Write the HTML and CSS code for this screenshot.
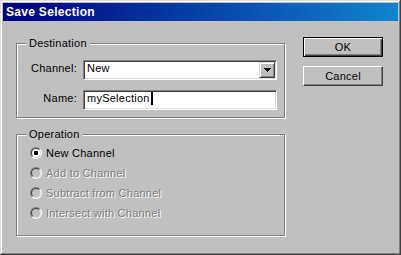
FILE: index.html
```html
<!DOCTYPE html>
<html lang="en">
<head>
    <meta charset="UTF-8">
    <title>Save Selection</title>
    <link rel="stylesheet" href="styles.css">
</head>
<body>
    <div class="window">
        <div class="titlebar">Save Selection</div>

        <div class="dialog">
            <div class="groups">
                <fieldset class="group dest">
                    <legend>Destination</legend>
                    <div class="field-row">
                        <label>Channel:</label>
                        <div class="select">
                            <span class="select-value">New</span>
                            <span class="select-arrow">
                                <svg width="7" height="4" viewBox="0 0 7 4" shape-rendering="crispEdges">
                                    <path d="M0 0h7v1h-1v1h-1v1h-1v1h-1v-1h-1v-1h-1v-1h-1z" fill="#000"/>
                                </svg>
                            </span>
                        </div>
                    </div>
                    <div class="field-row">
                        <label>Name:</label>
                        <div class="textbox">mySelection<span class="caret"></span></div>
                    </div>
                </fieldset>

                <fieldset class="group op">
                    <legend>Operation</legend>
                    <div class="radio-row"><span class="radio checked"></span>New Channel</div>
                    <div class="radio-row disabled"><span class="radio"></span>Add to Channel</div>
                    <div class="radio-row disabled"><span class="radio"></span>Subtract from Channel</div>
                    <div class="radio-row disabled"><span class="radio"></span>Intersect with Channel</div>
                </fieldset>
            </div>

            <div class="buttons">
                <button class="btn default">OK</button>
                <button class="btn">Cancel</button>
            </div>
        </div>
    </div>
</body>
</html>
```

FILE: styles.css
```css
body {
    margin: 0;
    font-family: 'Liberation Sans', Arial, sans-serif;
    font-size: 11px;
    letter-spacing: 0.25px;
    background-color: #c0c0c0;
}

.window {
    width: 401px;
    height: 255px;
    box-sizing: border-box;
    padding: 3px;
    background-color: #c0c0c0;
    box-shadow: inset -1px -1px #404040, inset 1px 1px #dfdfdf,
                inset -2px -2px #808080, inset 2px 2px #fff;
}

.titlebar {
    height: 18px;
    line-height: 18px;
    padding-left: 3px;
    color: white;
    font-size: 12px;
    font-weight: bold;
    letter-spacing: 0.3px;
    background: linear-gradient(to right, #000080, #1084d0);
}

.dialog {
    display: flex;
    align-items: flex-start;
    gap: 18px;
    padding: 16px 0 0 13px;
}

.groups {
    width: 269px;
    display: flex;
    flex-direction: column;
    gap: 10px;
}

/* etched group box */
.group {
    margin: 0;
    min-width: 0;
    border: 1px solid #808080;
    box-shadow: inset 1px 1px #fff, 1px 1px #fff;
    padding: 0 7px 0 9px;
}

.group legend {
    padding: 0 3px;
    line-height: 13px;
    background-color: #c0c0c0;
    color: #000;
}

.dest {
    padding-top: 10px;
    padding-bottom: 7px;
    display: flex;
    flex-direction: column;
    gap: 10px;
}

.op {
    padding-top: 2px;
    padding-bottom: 12px;
}

.field-row {
    display: grid;
    grid-template-columns: 51px 194px;
    column-gap: 6px;
    align-items: start;
}

.field-row label {
    text-align: right;
    line-height: 13px;
    padding-top: 2px;
}

/* sunken input boxes */
.select, .textbox {
    height: 20px;
    box-sizing: border-box;
    background-color: white;
    border: 1px solid;
    border-color: #808080 #fff #fff #808080;
    box-shadow: inset 1px 1px #404040, inset -1px -1px #dfdfdf;
    padding: 1px 1px 1px 3px;
    line-height: 13px;
}

.select {
    display: flex;
    justify-content: space-between;
    padding-right: 1px;
}

.select-arrow {
    width: 16px;
    height: 16px;
    box-sizing: border-box;
    background-color: #c0c0c0;
    border: 1px solid;
    border-color: #dfdfdf #404040 #404040 #dfdfdf;
    box-shadow: inset 1px 1px #fff, inset -1px -1px #808080;
    display: flex;
    align-items: center;
    justify-content: center;
}

.caret {
    display: inline-block;
    width: 2px;
    height: 13px;
    margin-left: 1px;
    background-color: #000;
    vertical-align: top;
}

.radio-row {
    height: 20px;
    display: flex;
    align-items: center;
    gap: 4px;
    padding-left: 4px;
}

.radio-row.disabled {
    color: #808080;
    text-shadow: 1px 1px 0 #fff;
}

.radio {
    width: 12px;
    height: 12px;
    box-sizing: border-box;
    border-radius: 50%;
    border: 1px solid;
    border-color: #808080 #fff #fff #808080;
    position: relative;
}

.radio::before {
    content: '';
    position: absolute;
    inset: 0;
    border-radius: 50%;
    border: 1px solid;
    border-color: #404040 #dfdfdf #dfdfdf #404040;
    background-color: white;
}

.disabled .radio::before {
    background-color: #c0c0c0;
}

.radio.checked::after {
    content: '';
    position: absolute;
    left: 3px;
    top: 3px;
    width: 4px;
    height: 4px;
    border-radius: 1px;
    background-color: #000;
}

.buttons {
    width: 80px;
    display: flex;
    flex-direction: column;
    gap: 9px;
}

.btn {
    height: 20px;
    padding: 0;
    font-family: inherit;
    font-size: 11px;
    letter-spacing: 0.25px;
    color: #000;
    background-color: #c0c0c0;
    border: 1px solid;
    border-color: #fff #404040 #404040 #fff;
    box-shadow: inset -1px -1px #808080;
}

.btn.default {
    border-color: #000;
    box-shadow: inset 1px 1px #fff, inset -1px -1px #404040, inset -2px -2px #808080;
}
```
